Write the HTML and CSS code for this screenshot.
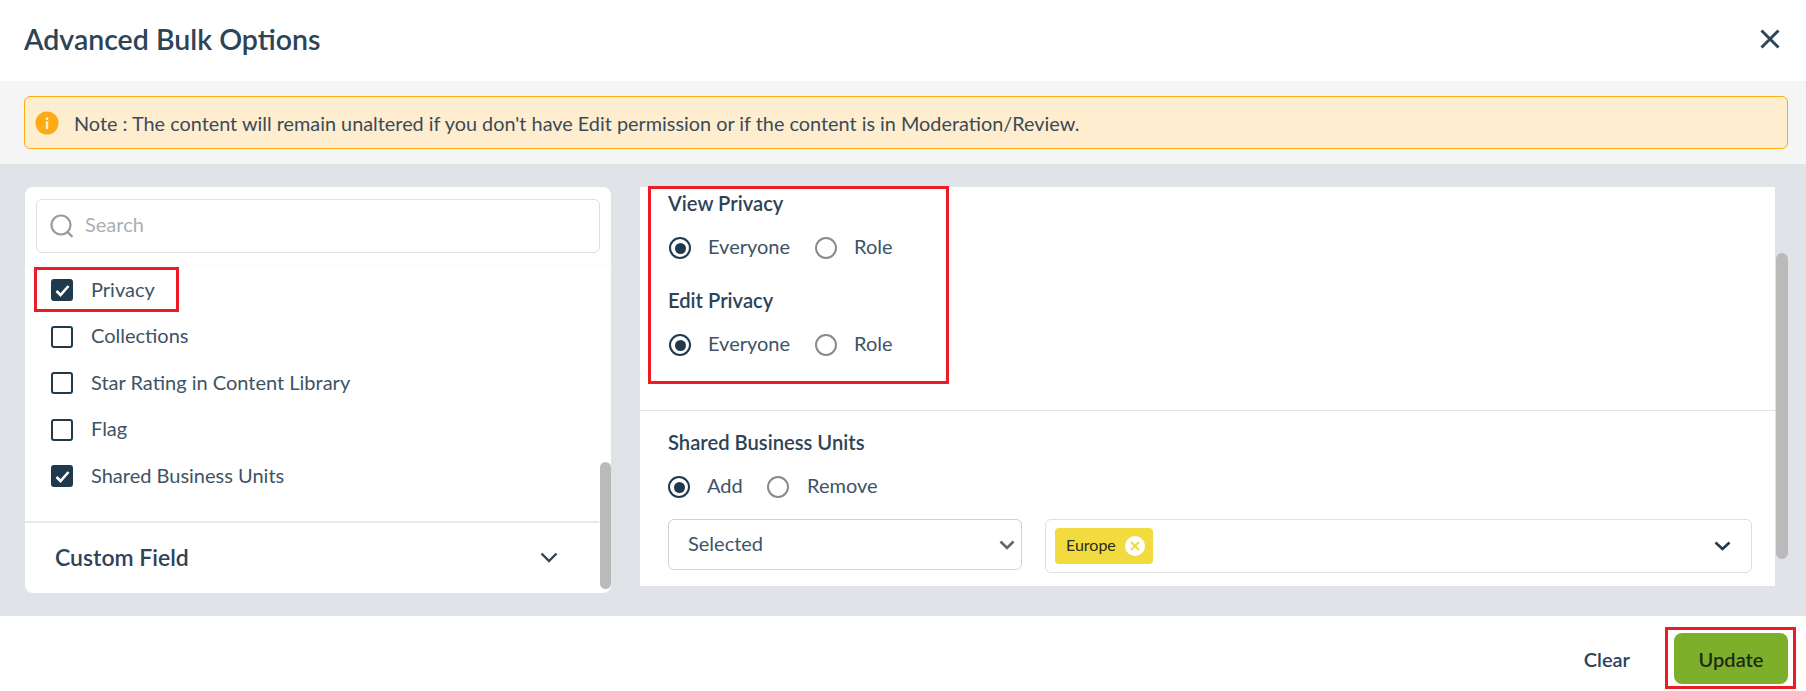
FILE: index.html
```html
<!DOCTYPE html>
<html lang="en">
<head>
  <meta charset="UTF-8">
  <title>Advanced Bulk Options</title>
  <link rel="stylesheet" href="styles.css">
</head>
<body>
  <header class="modal-head">
    <h1>Advanced Bulk Options</h1>
    <button class="close" aria-label="Close">
      <svg width="22" height="22" viewBox="0 0 22 22"><path d="M2.5 2.5l17 17M19.5 2.5l-17 17" stroke="#2f4558" stroke-width="3" fill="none"/></svg>
    </button>
  </header>

  <div class="note-band">
    <div class="note">
      <svg width="24" height="24" viewBox="0 0 24 24"><circle cx="12" cy="12" r="11.5" fill="#fdab14"/><rect x="10.8" y="10.5" width="2.4" height="7.5" fill="#fff3d6"/><rect x="10.8" y="6.5" width="2.4" height="2.4" fill="#fff3d6"/></svg>
      <span>Note : The content will remain unaltered if you don't have Edit permission or if the content is in Moderation/Review.</span>
    </div>
  </div>

  <main class="modal-body">
    <section class="side">
      <div class="search-wrap">
        <div class="search">
          <svg width="26" height="26" viewBox="0 0 26 26"><circle cx="12" cy="12" r="9.5" stroke="#9a9a9a" stroke-width="2.2" fill="none"/><path d="M18.5 19l5 5" stroke="#9a9a9a" stroke-width="2.4" fill="none"/></svg>
          <span class="txt">Search</span>
        </div>
      </div>
      <ul class="checks">
        <li>
          <span class="box on"><svg width="17" height="17" viewBox="0 0 17 17"><path d="M2.5 9l4 4L14.5 4" stroke="#fff" stroke-width="2.6" fill="none"/></svg></span>
          <span class="txt">Privacy</span>
          <span class="red-mark mark-privacy"></span>
        </li>
        <li><span class="box"></span><span class="txt">Collections</span></li>
        <li><span class="box"></span><span class="txt">Star Rating in Content Library</span></li>
        <li><span class="box"></span><span class="txt">Flag</span></li>
        <li>
          <span class="box on"><svg width="17" height="17" viewBox="0 0 17 17"><path d="M2.5 9l4 4L14.5 4" stroke="#fff" stroke-width="2.6" fill="none"/></svg></span>
          <span class="txt">Shared Business Units</span>
        </li>
      </ul>
      <div class="custom-field">
        <span class="txt">Custom Field</span>
        <svg width="18" height="11" viewBox="0 0 18 11"><path d="M1.5 1.5L9 9l7.5-7.5" stroke="#2f4558" stroke-width="2.4" fill="none"/></svg>
      </div>
      <div class="thumb side-thumb"></div>
    </section>

    <section class="detail">
      <div class="privacy">
        <span class="red-mark mark-view"></span>
        <h2>View Privacy</h2>
        <div class="radios">
          <span class="radio on"></span><label class="wide">Everyone</label>
          <span class="radio"></span><label>Role</label>
        </div>
        <h2 class="second">Edit Privacy</h2>
        <div class="radios">
          <span class="radio on"></span><label class="wide">Everyone</label>
          <span class="radio"></span><label>Role</label>
        </div>
      </div>
      <div class="units">
        <h2>Shared Business Units</h2>
        <div class="radios">
          <span class="radio on"></span><label class="narrow">Add</label>
          <span class="radio"></span><label class="remove">Remove</label>
        </div>
        <div class="unit-fields">
          <div class="select">
            <span class="txt">Selected</span>
            <svg width="16" height="10" viewBox="0 0 16 10"><path d="M1.5 1.5L8 8l6.5-6.5" stroke="#666" stroke-width="2.6" fill="none"/></svg>
          </div>
          <div class="multi">
            <span class="chip"><span class="txt">Europe</span>
              <span class="chip-x"><svg width="10" height="10" viewBox="0 0 10 10"><path d="M1 1l8 8M9 1L1 9" stroke="#f2db3e" stroke-width="2" fill="none"/></svg></span>
            </span>
            <svg width="17" height="10" viewBox="0 0 17 10"><path d="M1.5 1.5L8.5 8l7-6.5" stroke="#1f3a4d" stroke-width="2.6" fill="none"/></svg>
          </div>
        </div>
      </div>
    </section>
    <div class="track"><div class="thumb main-thumb"></div></div>
  </main>

  <footer class="modal-foot">
    <button class="clear">Clear</button>
    <div class="update-wrap">
      <button class="update">Update</button>
      <span class="red-mark mark-update"></span>
    </div>
  </footer>
</body>
</html>
```

FILE: styles.css
```css
* {
  margin: 0;
  padding: 0;
  box-sizing: border-box;
}
body {
  width: 1806px;
  height: 691px;
  overflow: hidden;
  background: #fff;
  font-family: 'Lato', sans-serif;
  color: #3e5366;
  font-size: 20px;
}
button {
  font-family: inherit;
  border: none;
  background: none;
  cursor: pointer;
}
.txt {
  margin-bottom: 2px;
}
.modal-head {
  height: 81px;
  padding: 0 25px 4px 24px;
  display: flex;
  align-items: center;
  justify-content: space-between;
}
.modal-head h1 {
  font-size: 28.5px;
  font-weight: 600;
  color: #2d4356;
}
.close {
  display: flex;
}
.note-band {
  height: 83px;
  background: #f5f5f5;
  padding: 15px 18px 15px 24px;
}
.note {
  height: 53px;
  display: flex;
  align-items: center;
  gap: 15px;
  padding-left: 10px;
  background: #feeecf;
  border: 1px solid #fdab14;
  border-radius: 6px;
  color: #3c4a57;
  font-size: 19.85px;
}
.modal-body {
  height: 452px;
  background: #e0e3e8;
  padding: 23px 18px 0 25px;
  display: flex;
  align-items: flex-start;
}
.side {
  position: relative;
  width: 586px;
  height: 406px;
  background: #fff;
  border-radius: 8px;
  margin-right: 29px;
}
.search-wrap {
  height: 78px;
  padding: 12px 11px 0 11px;
  box-shadow: 0 1px 2px rgba(0, 0, 0, 0.03);
}
.search {
  height: 54px;
  display: flex;
  align-items: center;
  gap: 10px;
  padding-left: 12px;
  border: 1px solid #dddfe2;
  border-radius: 6px;
  color: #a9afb5;
}
.search .txt {
  margin-bottom: 4px;
}
.checks {
  list-style: none;
  padding: 2px 0 0 26px;
  height: 258px;
  border-bottom: 2px solid #e8e9eb;
  margin-right: 12px;
}
.checks li {
  position: relative;
  height: 46.5px;
  display: flex;
  align-items: center;
  gap: 18px;
}
.checks .txt {
  margin-bottom: 3px;
}
.box {
  width: 22px;
  height: 22px;
  border: 2.5px solid #1f3a4d;
  border-radius: 3px;
  flex-shrink: 0;
  display: flex;
  align-items: center;
  justify-content: center;
}
.box.on {
  background: #1f3a4d;
}
.custom-field {
  height: 69px;
  padding: 0 53px 0 30px;
  display: flex;
  align-items: center;
  justify-content: space-between;
  font-size: 23px;
  font-weight: 600;
  color: #2d4356;
}
.thumb {
  width: 11.5px;
  background: #bababa;
  border-radius: 6px;
}
.side-thumb {
  position: absolute;
  right: 0;
  top: 275px;
  height: 127px;
}
.red-mark {
  position: absolute;
  border: 3px solid #ed1c24;
  pointer-events: none;
}
.mark-privacy {
  left: -17px;
  top: 0;
  width: 145px;
  height: 45px;
}
.detail {
  width: 1135px;
  height: 399px;
  background: #fff;
}
.privacy {
  position: relative;
  height: 224px;
  padding: 4px 0 0 29px;
  border-bottom: 1px solid #e3e4e6;
}
.privacy h2 {
  margin-left: -1px;
}
.mark-view {
  left: 8px;
  top: -1px;
  width: 301px;
  height: 198px;
}
.detail h2 {
  font-size: 20.2px;
  font-weight: 600;
  color: #2d4356;
  line-height: 24px;
}
.radios {
  display: flex;
  align-items: center;
  height: 24px;
  margin-top: 21px;
}
.radios label {
  margin-bottom: 4px;
}
.detail .second {
  margin-top: 28px;
}
.radio {
  width: 22px;
  height: 22px;
  border: 2.5px solid #8a8a8a;
  border-radius: 50%;
  flex-shrink: 0;
  margin-right: 17px;
  display: flex;
  align-items: center;
  justify-content: center;
}
.radio.on {
  border-color: #1f3a4d;
}
.radio.on::after {
  content: '';
  width: 11px;
  height: 11px;
  border-radius: 50%;
  background: #1f3a4d;
}
.wide {
  width: 107px;
}
.narrow {
  width: 60px;
}
.remove {
  margin-left: 1px;
}
.units {
  padding: 19px 23px 0 28px;
}
.unit-fields {
  display: flex;
  align-items: flex-start;
  gap: 23px;
  margin-top: 20px;
}
.select {
  width: 354px;
  height: 51px;
  display: flex;
  align-items: center;
  justify-content: space-between;
  padding: 0 6px 0 19px;
  border: 1px solid #cfd1d4;
  border-radius: 6px;
}
.select .txt {
  margin-bottom: 4px;
}
.multi {
  flex: 1;
  height: 54px;
  display: flex;
  align-items: center;
  justify-content: space-between;
  padding: 0 20px 0 9px;
  border: 1px solid #dddfe2;
  border-radius: 6px;
}
.chip {
  width: 98px;
  height: 36px;
  display: flex;
  align-items: center;
  justify-content: space-between;
  padding: 0 8px 0 11px;
  background: #f2db3e;
  border-radius: 4px;
  color: #2b2b20;
  font-size: 16px;
}
.chip .txt {
  margin-bottom: 4px;
}
.chip-x {
  width: 20px;
  height: 20px;
  background: #fff;
  border-radius: 50%;
  display: flex;
  align-items: center;
  justify-content: center;
}
.track {
  width: 13px;
  height: 399px;
  padding: 66px 0 0 1px;
}
.main-thumb {
  height: 306px;
}
.modal-foot {
  height: 75px;
  padding: 17px 18px 0 0;
  display: flex;
  justify-content: flex-end;
  gap: 44px;
}
.clear {
  height: 51px;
  font-size: 20px;
  font-weight: 600;
  color: #2d4356;
}
.update-wrap {
  position: relative;
}
.update {
  width: 114px;
  height: 51px;
  background: #7daf2a;
  border-radius: 8px;
  font-size: 20px;
  font-weight: 600;
  color: #1d2b16;
}
.mark-update {
  left: -9px;
  top: -6px;
  width: 131px;
  height: 62px;
}
```
